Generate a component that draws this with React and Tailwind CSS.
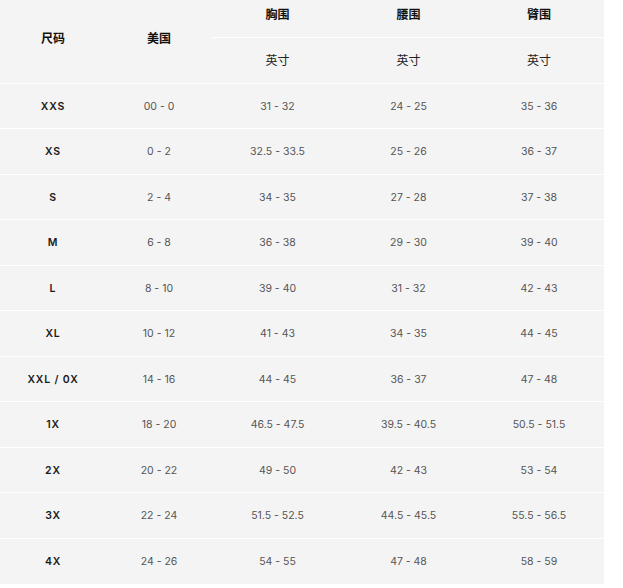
import React from 'react';

const rows = [
	['XXS', '00 - 0', '31 - 32', '24 - 25', '35 - 36'],
	['XS', '0 - 2', '32.5 - 33.5', '25 - 26', '36 - 37'],
	['S', '2 - 4', '34 - 35', '27 - 28', '37 - 38'],
	['M', '6 - 8', '36 - 38', '29 - 30', '39 - 40'],
	['L', '8 - 10', '39 - 40', '31 - 32', '42 - 43'],
	['XL', '10 - 12', '41 - 43', '34 - 35', '44 - 45'],
	['XXL / 0X', '14 - 16', '44 - 45', '36 - 37', '47 - 48'],
	['1X', '18 - 20', '46.5 - 47.5', '39.5 - 40.5', '50.5 - 51.5'],
	['2X', '20 - 22', '49 - 50', '42 - 43', '53 - 54'],
	['3X', '22 - 24', '51.5 - 52.5', '44.5 - 45.5', '55.5 - 56.5'],
	['4X', '24 - 26', '54 - 55', '47 - 48', '58 - 59'],
];

export default function App() {
	return (
		<div className="min-h-screen bg-white font-['Inter','Noto_Sans_CJK_SC',sans-serif]">
			<table className="w-[604px] table-fixed border-collapse bg-[#f4f4f4] text-center">
				<colgroup>
					<col className="w-[106px]" />
					<col className="w-[106px]" />
					<col className="w-[131px]" />
					<col className="w-[131px]" />
					<col />
				</colgroup>
				<thead>
					<tr className="h-[37px]">
						<th rowSpan={2} className="border-b border-white text-[12px] font-bold text-[#111] pt-[2px] pb-[6px]">尺码</th>
						<th rowSpan={2} className="border-b border-white text-[12px] font-bold text-[#111] pt-[2px] pb-[6px]">美国</th>
						<th className="border-b border-white text-[12px] font-bold text-[#111] pb-[6px]">胸围</th>
						<th className="border-b border-white text-[12px] font-bold text-[#111] pb-[6px]">腰围</th>
						<th className="border-b border-white text-[12px] font-bold text-[#111] pb-[6px]">臂围</th>
					</tr>
					<tr className="h-[46px]">
						<th className="border-b border-white text-[12px] font-normal text-[#222] pt-[2px]">英寸</th>
						<th className="border-b border-white text-[12px] font-normal text-[#222] pt-[2px]">英寸</th>
						<th className="border-b border-white text-[12px] font-normal text-[#222] pt-[2px]">英寸</th>
					</tr>
				</thead>
				<tbody>
					{rows.map((r, i) => (
						<tr key={r[0]} className={`h-[45.5px] ${i < rows.length - 1 ? 'border-b border-white' : ''}`}>
							<td className="pt-[2px] text-[10.5px] font-semibold tracking-[0.08em] text-[#1a1a1a]">{r[0]}</td>
							{r.slice(1).map((v, j) => (
								<td key={j} className="pt-[2px] text-[10.5px] text-[#555]">{v}</td>
							))}
						</tr>
					))}
				</tbody>
			</table>
		</div>
	);
}
